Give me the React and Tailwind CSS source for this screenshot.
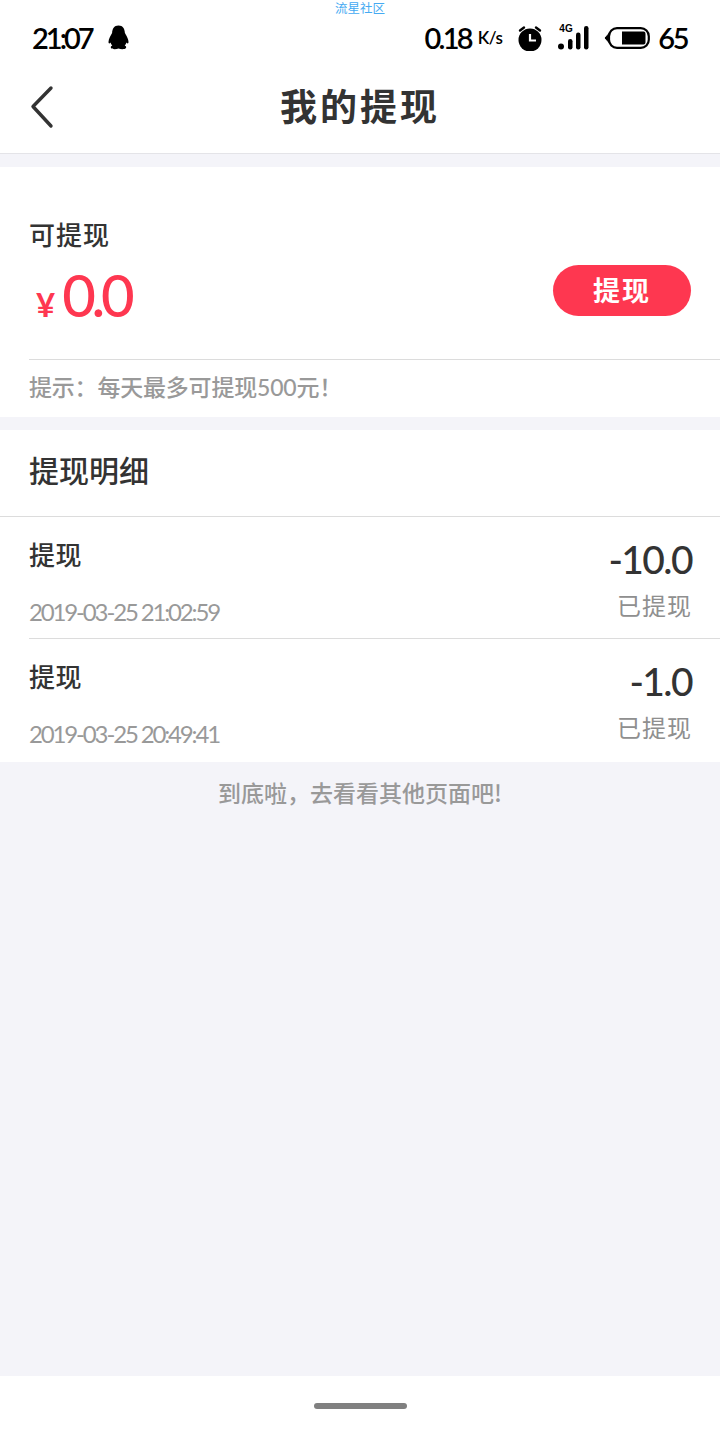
const cjk = "font-['Noto_Sans_CJK_SC','Noto_Sans',sans-serif]";
const lat = "font-['Lato','Noto_Sans_CJK_SC',sans-serif]";

function Penguin() {
  return (
    <svg width="23" height="25" viewBox="0 0 22 25" className="ml-[15px]">
      <path d="M11 0.5C6.5 0.5 4.8 4 4.6 8C3.6 10 1 13.5 1 17C1 18.5 1.8 19 3 17.5C3.4 18.8 4 19.8 4.8 20.6C3.5 21.2 3 22 3.5 23C4.5 24.5 8.5 24.5 11 23.5C13.5 24.5 17.5 24.5 18.5 23C19 22 18.500 21.2 17.2 20.6C18 19.8 18.6 18.8 19 17.5C20.2 19 21 18.5 21 17C21 13.5 18.4 10 17.4 8C17.2 4 15.5 0.5 11 0.5Z" fill="#000" />
    </svg>
  );
}

function Alarm() {
  return (
    <svg width="26" height="26" viewBox="0 0 26 26">
      <circle cx="13" cy="15" r="11.5" fill="#000" />
      <path d="M3 5.5L7 2.5M23 5.5L19 2.5" stroke="#000" strokeWidth="2.4" strokeLinecap="round" />
      <path d="M13 9V15.5H19" stroke="#fff" strokeWidth="2.2" fill="none" />
    </svg>
  );
}

function Signal() {
  return (
    <div className="relative w-[31px] h-[24px]">
      <span className="absolute left-[1px] top-[-2px] text-[10px] leading-[10px] font-bold text-black font-['Liberation_Sans',sans-serif]">4G</span>
      <svg width="31" height="24" viewBox="0 0 31 24" className="absolute left-0 top-0">
        <circle cx="3" cy="20.500" r="3" fill="#000" />
        <rect x="10" y="13" width="4.5" height="10.5" rx="2.2" fill="#000" />
        <rect x="18" y="6.5" width="4.5" height="17" rx="2.2" fill="#000" />
        <rect x="26" y="0" width="4.5" height="23.5" rx="2.2" fill="#000" />
      </svg>
    </div>
  );
}

function Battery() {
  return (
    <svg width="46" height="22" viewBox="0 0 46 22">
      <path d="M1 11L5 6.5V15.5Z" fill="#000" stroke="#000" strokeWidth="1" strokeLinejoin="round" />
      <rect x="5" y="1.2" width="39.8" height="19.6" rx="8" fill="#fff" stroke="#000" strokeWidth="2.2" />
      <path d="M18 4.5H39.5C41 4.5 41.5 5.5 41.5 7V15C41.5 16.5 41 17.5 39.5 17.5H18Z" fill="#000" />
    </svg>
  );
}

function Row({ date, amount, last }) {
  return (
    <div className={`ml-[29px] pr-[28px] flex justify-between ${last ? "h-[123px]" : "h-[122px] border-b border-[#dcdcdc]"}`}>
      <div className="flex flex-col">
        <div className={`mt-[21px] h-[32px] text-[26px] leading-[32px] tracking-[0.5px] font-medium text-[#333] ${cjk}`}>提现</div>
        <div className={`mt-[26px] text-[24px] leading-[32px] tracking-[-2.15px] text-[#999] ${lat}`}>{date}</div>
      </div>
      <div className="flex flex-col items-end">
        <div className={`mt-[17px] text-[39px] leading-[50px] tracking-[-1.6px] font-medium text-[#333] ${lat}`}>{amount}</div>
        <div className={`mt-[6px] text-[24px] leading-[30px] tracking-[1px] text-[#8f8f8f] ${cjk}`}>已提现</div>
      </div>
    </div>
  );
}

export default function App() {
  return (
    <div className="w-[720px] h-[1440px] bg-[#f4f4f9] flex flex-col overflow-hidden">
      <header className="bg-white border-b border-[#e4e4e8] h-[154px] flex flex-col">
        <div className="relative h-[70px] pl-[32px] pr-[33px] flex items-center justify-between">
          <div className={`absolute left-0 right-0 top-px text-center text-[12.5px] leading-[13px] text-[#45aaf2] ${cjk}`}>流星社区</div>
          <div className="flex items-center mt-[5px]">
            <span className={`text-[29px] leading-[34px] font-semibold tracking-[-3px] text-black ${lat}`}>21:07</span>
            <Penguin />
          </div>
          <div className="flex items-center mt-[5px]">
            <span className={`text-[29px] leading-[34px] font-semibold tracking-[-2.75px] text-black ${lat}`}>0.18</span>
            <span className={`ml-[7px] mr-[15px] text-[17px] leading-[34px] font-semibold tracking-[-0.5px] text-black ${lat}`}>K/s</span>
            <Alarm />
            <div className="w-[15px]" />
            <Signal />
            <div className="w-[15px]" />
            <Battery />
            <span className={`ml-[8px] text-[29px] leading-[34px] font-semibold tracking-[-2.5px] text-black ${lat}`}>65</span>
          </div>
        </div>
        <div className="relative flex-1 flex items-center justify-center">
          <svg width="26" height="44" viewBox="0 0 26 44" className="absolute left-[30px] top-[15px]">
            <path d="M21 3L3 21.500L21 41" fill="none" stroke="#333" strokeWidth="3.4" strokeLinecap="round" strokeLinejoin="round" />
          </svg>
          <h1 className={`text-[37px] leading-[44px] font-bold tracking-[3px] text-[#333] mb-[14px] ${cjk}`}>我的提现</h1>
        </div>
      </header>

      <section className="mt-[13px] bg-white h-[250px] flex flex-col">
        <div className={`mt-[51px] ml-[29px] text-[26px] leading-[32px] tracking-[1px] font-medium text-[#333] ${cjk}`}>可提现</div>
        <div className="flex items-center justify-between pl-[36px] pr-[29px] h-[58px] mt-[11px]">
          <div className="flex items-baseline text-[#fe3750] mt-[19px]">
            <span className={`text-[33px] leading-[58px] font-bold mr-[7px] ${lat}`}>¥</span>
            <span className={`text-[58px] leading-[58px] font-medium tracking-[-4.2px] ${lat}`}>0.0</span>
          </div>
          <button className={`w-[138px] h-[51px] rounded-full bg-[#fe3750] text-white text-[27px] font-bold tracking-[2px] ${cjk}`}>提现</button>
        </div>
        <div className="mt-[40px] ml-[29px] border-t border-[#dcdcdc] h-[58px]">
          <div className={`mt-[10px] text-[23px] leading-[32px] font-medium text-[#999] tracking-[-0.2px] ${cjk}`}>
            提示：每天最多可提现<span className={lat}>500</span>元！
          </div>
        </div>
      </section>

      <section className="mt-[13px] bg-white flex flex-col">
        <div className="h-[87px] border-b border-[#dcdcdc] pl-[29px] flex items-center">
          <span className={`text-[30px] leading-[40px] font-medium text-[#333] mb-[8px] ${cjk}`}>提现明细</span>
        </div>
        <Row date="2019-03-25 21:02:59" amount="-10.0" />
        <Row date="2019-03-25 20:49:41" amount="-1.0" last />
      </section>

      <div className={`mt-[14px] text-center text-[23px] leading-[32px] font-medium text-[#999] ${cjk}`}>到底啦，去看看其他页面吧!</div>

      <div className="mt-auto h-[64px] bg-white flex items-center justify-center">
        <div className="w-[93px] h-[6px] rounded-full bg-[#808080] mt-[-5px]" />
      </div>
    </div>
  );
}
